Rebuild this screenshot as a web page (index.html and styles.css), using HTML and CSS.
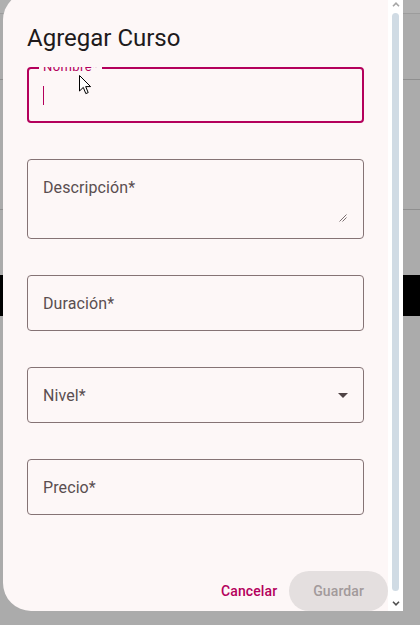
FILE: index.html
```html
<!DOCTYPE html>
<html lang="es">
<head>
<meta charset="utf-8">
<title>Agregar Curso</title>
<link rel="stylesheet" href="styles.css">
</head>
<body>
<div class="page">
  <div class="bg-top"></div>
  <div class="bg-row bg-row1"></div>
  <div class="bg-row bg-row2"></div>
  <div class="bg-row3"></div>
  <div class="bg-band"></div>
</div>

<div class="dialog">
  <div class="dialog-main">
    <h2 class="dialog-title">Agregar Curso</h2>
    <div class="dialog-content">
      <div class="field field-focused">
        <span class="float-label">Nombre*</span>
        <span class="caret"></span>
      </div>
      <div class="field field-textarea">
        <span class="label">Descripción*</span>
        <svg class="grip" width="8" height="8" viewBox="0 0 8 8"><path d="M7.5 0.5 L0.5 7.5 M7.5 3.5 L3.5 7.5" stroke="#5a4e50" stroke-width="0.8" fill="none"/></svg>
      </div>
      <div class="field">
        <span class="label">Duración*</span>
      </div>
      <div class="field field-select">
        <span class="label">Nivel*</span>
        <svg class="select-arrow" width="10" height="5" viewBox="0 0 10 5"><polygon points="0,0 10,0 5,5" fill="#4f4345"/></svg>
      </div>
      <div class="field">
        <span class="label">Precio*</span>
      </div>
    </div>
    <div class="dialog-actions">
      <button class="btn-text" type="button">Cancelar</button>
      <button class="btn-filled" type="button" disabled>Guardar</button>
    </div>
  </div>
  <div class="scrollbar">
    <div class="sb-up"><svg width="8" height="5" viewBox="0 0 8 5"><path d="M1 4.2 L4 1.2 L7 4.2" stroke="#a6a6a6" stroke-width="1.6" fill="none"/></svg></div>
    <div class="sb-thumb"></div>
    <div class="sb-down"><svg width="8" height="5" viewBox="0 0 8 5"><path d="M1 0.8 L4 3.8 L7 0.8" stroke="#505050" stroke-width="1.6" fill="none"/></svg></div>
  </div>
</div>

<svg class="pointer" width="13" height="20" viewBox="0 0 13 20"><path d="M0.5 0.5 L0.5 16 L4.3 12.4 L6.8 18.6 L9.2 17.6 L6.7 11.6 L11.6 11.6 Z" fill="#ffffff" stroke="#000000" stroke-width="1" stroke-linejoin="round"/></svg>
</body>
</html>
```

FILE: styles.css
```css
html, body {
  margin: 0;
  padding: 0;
}

body {
  width: 420px;
  height: 625px;
  overflow: hidden;
  background: #ababab;
  font-family: Roboto, "Noto Sans", "Liberation Sans", sans-serif;
  position: relative;
}

.page {
  display: flex;
  flex-direction: column;
}

.bg-top {
  height: 13px;
  background: #b0b0b0;
  border-bottom: 1px solid #9c9c9c;
}

.bg-row {
  border-bottom: 1px solid #8f8f8f;
}

.bg-row1 {
  height: 65px;
}

.bg-row2 {
  height: 129px;
}

.bg-row3 {
  height: 65px;
}

.bg-band {
  height: 41px;
  background: #000000;
}

.dialog {
  position: absolute;
  left: 3px;
  top: -8px;
  width: 400px;
  height: 619px;
  display: flex;
}

.dialog-main {
  width: 385px;
  height: 100%;
  background: #fdf7f7;
  border-radius: 28px 0 0 28px;
  display: flex;
  flex-direction: column;
  overflow: hidden;
}

.dialog-title {
  margin: 0;
  padding: 30px 24px 13px;
  font-size: 24px;
  line-height: 32px;
  font-weight: 400;
  color: #201a1b;
}

.dialog-content {
  flex: 1;
  overflow: hidden;
  padding: 0 24px;
}

.field {
  position: relative;
  box-sizing: border-box;
  height: 56px;
  margin-bottom: 36px;
  border: 1px solid #857375;
  border-radius: 4px;
  display: flex;
  align-items: center;
  padding: 1px 15px 0;
}

.label {
  font-size: 16px;
  line-height: 24px;
  color: #5a4e50;
  letter-spacing: 0.1px;
}

.field-focused {
  border: 2px solid #b4005c;
  padding: 0 14px;
}

.float-label {
  position: absolute;
  left: 10px;
  top: -2px;
  transform: translateY(-50%);
  padding: 0 4px;
  background: #fdf7f7;
  font-size: 13px;
  line-height: 16px;
  letter-spacing: 0.4px;
  color: #b4005c;
}

.caret {
  width: 1px;
  height: 19px;
  background: #b4005c;
  margin-top: 1px;
}

.field-textarea {
  height: 80px;
  align-items: flex-start;
  padding-top: 16px;
}

.grip {
  position: absolute;
  right: 16px;
  bottom: 16px;
}

.field-select {
  justify-content: space-between;
}

.select-arrow {
  margin-top: -1px;
}

.dialog-actions {
  height: 40px;
  display: flex;
  justify-content: flex-end;
  align-items: stretch;
}

.btn-text,
.btn-filled {
  font-family: Roboto, "Noto Sans", "Liberation Sans", sans-serif;
  font-size: 14px;
  font-weight: 500;
  letter-spacing: 0.1px;
  border: none;
  margin: 0;
  cursor: pointer;
}

.btn-text {
  background: transparent;
  color: #b4005c;
  padding: 0 12px;
}

.btn-filled {
  background: #e4dfdf;
  color: #a29a9b;
  padding: 0 24px;
  border-radius: 20px;
}

.scrollbar {
  width: 15px;
  height: 100%;
  background: #ffffff;
  display: flex;
  flex-direction: column;
}

.sb-up {
  height: 21px;
  box-sizing: border-box;
  padding-bottom: 6px;
  display: flex;
  align-items: flex-end;
  justify-content: center;
}

.sb-thumb {
  flex: 1;
  margin: 0 4px;
  background: #d0dbe4;
  border-radius: 4px;
}

.sb-down {
  height: 20px;
  box-sizing: border-box;
  padding-top: 10px;
  display: flex;
  align-items: flex-start;
  justify-content: center;
}

.sb-up svg,
.sb-down svg {
  display: block;
}

.pointer {
  position: absolute;
  left: 79px;
  top: 75px;
}
```
